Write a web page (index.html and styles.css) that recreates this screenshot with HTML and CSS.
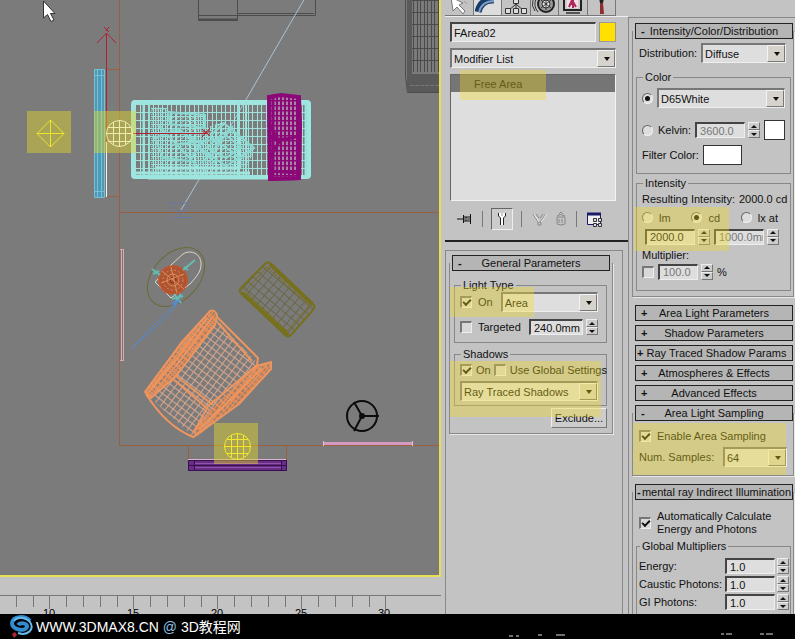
FILE: index.html
```
<!DOCTYPE html>
<html lang="en">
<head>
  <meta charset="UTF-8">
  <title>Modify Panel - Free Area Light</title>
  <link rel="stylesheet" href="styles.css">
</head>
<body>

<div class="workspace">

  <main class="view">
    <div class="viewport">
      <svg class="scene" viewBox="0 0 439 575" preserveAspectRatio="xMinYMin slice" role="img" aria-label="Top view of the room">
        <defs>
          <pattern id="sofa-mesh" width="9" height="8" patternUnits="userSpaceOnUse">
            <path d="M0 .5H9M.5 0V8M5.5 0V8" stroke="#a0e2dc" fill="none"/>
          </pattern>
          <pattern id="dense-mesh" width="5" height="4" patternUnits="userSpaceOnUse">
            <path d="M0 .5H5M.5 0V4M0 4L5 0" stroke="#98e2dc" fill="none"/>
          </pattern>
          <pattern id="purple-mesh" width="4" height="5" patternUnits="userSpaceOnUse">
            <path d="M0 .5H4M1 0V5" stroke="#8c0878" stroke-width="2" fill="none"/>
          </pattern>
          <pattern id="chair-mesh" width="6" height="6" patternUnits="userSpaceOnUse" patternTransform="rotate(37)">
            <path d="M0 .5H6M.5 0V6" stroke="#d8a68c" fill="none"/>
          </pattern>
          <pattern id="chair-edge" width="3" height="5" patternUnits="userSpaceOnUse" patternTransform="rotate(40)">
            <path d="M0 .5H3M.5 0V5" stroke="#f08c50" stroke-width="2" fill="none"/>
          </pattern>
          <pattern id="table-mesh" width="7" height="7" patternUnits="userSpaceOnUse" patternTransform="rotate(40)">
            <path d="M0 .5H7M.5 0V7" stroke="#6b6848" fill="none"/>
          </pattern>
          <pattern id="gray-mesh" width="7" height="12" patternUnits="userSpaceOnUse">
            <path d="M0 .5H7M.5 0V12M4.5 0V12" stroke="#4b4b4b" fill="none"/>
          </pattern>
        </defs>

        <!-- cabinets -->
        <g fill="none" stroke="#4c4c4c">
          <path d="M198.500 0V20.500H237.500V0M198 15.500H315.500V0M237 13.500H314" />
          <path d="M198 19.500H238" stroke-width="2"/>
          <path d="M405.500 0V76L407.500 92.500H439" />
        </g>
        <rect x="411" y="0" width="28" height="72" fill="url(#gray-mesh)"/>
        <path d="M407 0h5v74h27v18h-32z" fill="#5a5a5a"/>
        <path d="M410 85.500H439" stroke="#777" stroke-dasharray="4 1"/>

        <!-- walls -->
        <g fill="#98603f">
          <rect x="119" y="0" width="1" height="446"/>
          <rect x="119" y="212" width="320" height="1"/>
          <rect x="119" y="445" width="320" height="1"/>
        </g>
        <path d="M106 69.500H119M106 196.500H119M188.500 446V460M286.500 446V460" fill="none" stroke="#98603f"/>

        <!-- window on the left -->
        <rect x="94" y="69" width="11" height="128" fill="#4e98b8"/>
        <path d="M94.500 69.500H104.500V197.500H94.500ZM97.500 69V197M101.500 69V197M94 75.500H105M94 191.500H105" fill="none" stroke="#77c0d6"/>
        <path d="M106.500 142V197" stroke="#f2f2e8"/>

        <!-- light target line -->
        <path d="M305 -2L240 110L181 210" fill="none" stroke="#a9c3d8"/>
        <path d="M168 203H188M171 205L180 215L190 205M173 217.500H192" fill="none" stroke="#6878a5"/>

        <!-- sofa -->
        <rect x="132" y="101" width="178" height="78" fill="url(#sofa-mesh)"/>
        <rect x="133" y="102" width="176" height="75" rx="2" fill="none" stroke="#a0e6e0" stroke-width="4"/>
        <path d="M143.500 102V177M149 103V178M305.500 102V177M238 102V177M246 102V177" stroke="#98e2dc" stroke-width="2"/>
        <path d="M151 107L167 108L171 113L204 114L205 128L223 122L255 149L246 168L205 177H151Z" fill="url(#dense-mesh)"/>
        <path d="M168 112L205 115V128L170 124ZM198 147L224 123L254 148L226 166ZM207 148L223 133L241 147L226 158ZM155 138L176 130L201 143L190 161L163 158ZM178 128L215 163M171 145L221 139M159 126L199 168M202 163L233 126M211 137L242 159" fill="none" stroke="#8bd9d2" stroke-width="2"/>
        <path d="M136 173H250M148 178H268M155 168H239" stroke="#a0e6e0" stroke-width="3"/>

        <!-- sofa back cushion -->
        <path d="M268 96H300V180H268Z" fill="#a785a5"/>
        <path d="M267 96L276 94L299 96L301 180L268 181Z" fill="url(#purple-mesh)"/>
        <path d="M269 97L281 95L299 97L300 125L299 178L270 179Z" fill="none" stroke="#8c0878" stroke-width="4"/>
        <path d="M273 98V177M269 137Q281 142 298 136M270 125L279 142L270 158M271 171L297 173" fill="none" stroke="#8c0878" stroke-width="3"/>

        <!-- gizmo axes -->
        <rect x="107" y="133" width="101" height="1" fill="#b02030"/>
        <g fill="none" stroke="#b02030">
          <path d="M106.500 142V34M97 43L106.500 33L116 43M104 27L109 32M109 27L106 31"/>
          <path d="M202 129L210 136M210 128L202 137M203 132H211"/>
        </g>

        <!-- small round table with lamp -->
        <ellipse cx="176" cy="277" rx="34" ry="23" transform="rotate(-47 176 277)" fill="none" stroke="#6c6a36"/>
        <path d="M171 265L183 254C191 249 201 254 201 264C201 271 198 275 190 284L171 298L155 282Z" fill="none" stroke="#dfd8c8"/>
        <circle cx="173" cy="280" r="14" fill="#ad5430" stroke="#c55329" stroke-width="2" stroke-dasharray="3 1"/>
        <g fill="none" stroke="#df8c5d">
          <circle cx="173" cy="280" r="10" stroke-dasharray="2 2"/>
          <circle cx="173" cy="280" r="6"/>
          <circle cx="173" cy="280" r="3" stroke="#7d331f"/>
          <path d="M162 271L184 289M161 283L184 274M171 267L177 293"/>
        </g>
        <path d="M183 270L195 260M184 267L188 270M152 269L160 275M153 274L159 271M172 299L183 296M174 294L181 303M181 294L175 303" fill="none" stroke="#65bbb0" stroke-width="2"/>
        <path d="M131 349L176 302M133 347L166 318L177 304" fill="none" stroke="#5989c8"/>
        <path d="M172 302L181 299L175 307Z" fill="#5989c8"/>

        <!-- coffee table -->
        <path d="M268 262L315 307L288 338L239 290Z" fill="url(#table-mesh)"/>
        <path d="M266 263Q268 261 271 264L313 304Q316 307 312 311L291 335Q288 338 285 335L241 293Q238 290 242 287Z" fill="none" stroke="#77701c" stroke-width="2"/>
        <path d="M267 267L309 306L287 331L245 291Z" fill="none" stroke="#77701c"/>
        <path d="M242 293L288 335M270 264L312 304" stroke="#77701c" stroke-width="4"/>

        <!-- armchair -->
        <path d="M210 313L217 320L258 364L270 365L240 397L194 437L146 394L173 355Z" fill="url(#chair-mesh)"/>
        <path d="M211 310L216 314L214 325L176 376L151 398L145 392L181 342Z" fill="url(#chair-edge)"/>
        <path d="M257 365L270 362L271 369L239 404L195 438L193 430L214 406Z" fill="url(#chair-edge)"/>
        <g fill="none" stroke="#ed955f" stroke-width="2">
          <path d="M210 311Q215 309 217 315L215 325L176 376L151 398L145 392L182 342Z"/>
          <path d="M216 316L258 358L257 365L211 404M218 323L252 361M146 394Q166 426 193 437L239 404L271 369V362L257 366L208 406L194 432"/>
          <path d="M176 376L213 405M173 379L209 410M207 318L178 357L151 389M212 318L176 366M262 368L225 405L199 429"/>
        </g>

        <!-- window at the bottom -->
        <rect x="188" y="460" width="99" height="11" fill="#633082"/>
        <path d="M188.500 460.500H286.500V470.500H188.500ZM188 465.500H287M194.500 460V471M281.500 460V471" fill="none" stroke="#3e0b57"/>
        <path d="M195 463.500H281M195 467.500H281" stroke="#9350ad"/>
        <path d="M188 459.500H286" stroke="#d6b7c8"/>

        <!-- doors -->
        <path d="M121.500 250V360.500M123.500 249V360M120 249.500H124M120 360.500H124" stroke="#d8a8b8"/>
        <path d="M323 443.500H413" stroke="#d59ac1" stroke-width="3"/>
        <path d="M323.500 441V446M412.500 441V446" stroke="#e4bfd8"/>

        <!-- floor lamp -->
        <g fill="none" stroke="#0c0c0c" stroke-width="2">
          <circle cx="362" cy="416" r="15"/>
          <path d="M362 416H379M362 416L354 402M362 416L354 431"/>
        </g>
        <circle cx="362" cy="416" r="3" fill="#0c0c0c"/>

        <!-- highlighted lights -->
        <g fill="#e4d62c" fill-opacity=".45">
          <rect x="27" y="111" width="44" height="42"/>
          <rect x="94" y="111" width="42" height="42"/>
          <rect x="214" y="423" width="44" height="41"/>
        </g>
        <path d="M50.500 120L64 133.500L50.500 147L37 133.500ZM50.500 120V147M37 133.500H64" fill="none" stroke="#ece52a"/>
        <g fill="none" stroke="#f0ecae">
          <circle cx="119.500" cy="133.500" r="13"/>
          <path d="M119.500 120V147M108 127.500H131M106 133.500H133M108 141.500H131M113.500 122V145M125.500 122V145"/>
        </g>
        <g fill="none" stroke="#f2e92e">
          <circle cx="237.500" cy="446.500" r="13"/>
          <path d="M237.500 433V460M224 446.500H251M227 439.500H248M227 453.500H248M231.500 435V458M243.500 435V458"/>
        </g>

        <path d="M43.500 1V18L47.500 14.500L51 21.500L54 20L50.500 13.500H55Z" fill="#fff" stroke="#333"/>
      </svg>
    </div>
    <svg class="ruler" aria-label="Time ruler">
      <defs>
        <pattern id="ticks" x="16" width="84" height="16" patternUnits="userSpaceOnUse">
          <path d="M.5 2V13M17.500 2V13M33.500 2V15M50.500 2V13M67.500 2V13" stroke="#777" fill="none"/>
        </pattern>
      </defs>
      <rect y="1" width="100%" height="1" fill="#777"/>
      <rect x="16" width="370" height="15" fill="url(#ticks)"/>
      <g class="ruler-label">
        <text x="49" y="23">10</text>
        <text x="133" y="23">15</text>
        <text x="217" y="23">20</text>
        <text x="301" y="23">25</text>
        <text x="384" y="23">30</text>
      </g>
    </svg>
  </main>

  <aside class="modify">
    <nav class="tabs">
      <button type="button" aria-label="Create"><svg width="24" height="16"><path d="M4 -3L6 11L10 7L16 14L18 11L12 5L16 3Z" fill="#fff" stroke="#777"/><path d="M17 1L20 4" stroke="#999"/></svg></button>
      <button type="button" class="active" aria-label="Modify"><svg width="24" height="16"><path d="M3 12Q6 -1 19 0" fill="none" stroke="#183a66" stroke-width="7"/><path d="M4 12Q7 1 19 1" fill="none" stroke="#7c9fca" stroke-width="2"/></svg></button>
      <button type="button" aria-label="Hierarchy"><svg width="24" height="16"><path d="M12 2V8M4 11L12 4L20 11" fill="none" stroke="#333"/><path d="M9.500 -2H14.500V3.500H9.500ZM1.500 8.500H6.500V13.500H1.500ZM9.500 8.500H14.500V13.500H9.500ZM17.500 8.500H22.500V13.500H17.500Z" fill="#ddd" stroke="#333"/></svg></button>
      <button type="button" aria-label="Motion"><svg width="24" height="16"><circle cx="14" cy="4" r="8" fill="#999" stroke="#222" stroke-width="2"/><circle cx="14" cy="4" r="4" fill="#eee" stroke="#333"/><path d="M9 0L19 8M19 0L9 8M14 -1V10" stroke="#333"/><path d="M4 -1Q1 6 6 12M1 0Q-1 6 3 11" fill="none" stroke="#333"/></svg></button>
      <button type="button" aria-label="Display"><svg width="24" height="16"><path d="M3 -2H20V10H3Z" fill="#ccc" stroke="#222" stroke-width="2"/><path d="M6 0H17V8H6Z" fill="#f5dbe5"/><path d="M8 7L11 0L15 7M9 4H14M12 0V8" fill="none" stroke="#ad2859" stroke-width="2"/><path d="M5 12H19V14H5Z" fill="#555"/></svg></button>
      <button type="button" aria-label="Utilities"><svg width="24" height="16"><path d="M10 -2H15L14 3H11Z" fill="#222"/><path d="M11 3H14L15 14H11Z" fill="#8f2c30"/></svg></button>
    </nav>

    <div class="object">
      <div class="name-row">
        <input type="text" class="field name" value="FArea02" aria-label="Object name">
        <button type="button" class="swatch yellow" aria-label="Object color"></button>
      </div>
      <span class="combo">
        <select aria-label="Modifier List"><option>Modifier List</option></select>
      </span>
      <ul class="stack">
        <li class="selected">Free Area<span class="marker marker-stack"></span></li>
      </ul>
      <div class="stack-tools">
        <button type="button" aria-label="Pin stack"><svg width="17" height="16"><path d="M1 8H7M7.500 4V12M7 6H14M7 10H14M14.500 3V13M10 6V10" fill="none" stroke="#111"/><path d="M8 8H14" stroke="#777" stroke-width="2"/></svg></button>
        <i></i>
        <button type="button" class="pressed" aria-label="Show end result"><svg width="12" height="16"><path d="M3 2H5V5H7V2H9V5L8 7V14H4V7L3 5Z" fill="#fff"/><path d="M2.500 2V5L4.500 7V14M9.500 2V5L7.500 7V14" fill="none" stroke="#222"/></svg></button>
        <i></i>
        <button type="button" aria-label="Make unique"><svg width="17" height="16"><path d="M2 3L7 11M15 3L9 11M5 3L8 7M12 3L9 7M7 11H10V14H7Z" fill="none" stroke="#888"/><path d="M3 3L8 11M16 3L10 11" stroke="#eee"/></svg></button>
        <button type="button" aria-label="Remove modifier"><svg width="13" height="16"><path d="M3 6H11V13Q7 15 3 13ZM3 5Q6 2 11 5M5 3L7 1L9 3M5 8V12M8 8V12" fill="none" stroke="#888"/></svg></button>
        <i></i>
        <button type="button" aria-label="Configure modifier sets"><svg width="17" height="16"><path d="M1.500 2.500H14.500V13.500H1.500Z" fill="#eee" stroke="#1a1a66"/><path d="M1 3H15" stroke="#1a1a66" stroke-width="3"/><path d="M7.500 7.500H10.500V10.500H7.500ZM12.500 7.500H15.500V10.500H12.500ZM7.500 12.500H10.500V15.500H7.500ZM12.500 12.500H15.500V15.500H12.500Z" fill="#ddd" stroke="#333"/></svg></button>
      </div>
    </div>

    <div class="rollouts">
      <section class="rollout open general">
        <button type="button" class="title"><b>-</b>General Parameters</button>
        <div class="rollout-body">
          <span class="marker marker-light"></span>
          <span class="marker marker-shadow"></span>
          <fieldset class="light-type">
            <legend>Light Type</legend>
            <div class="row">
              <label class="check"><input type="checkbox" checked>On</label>
              <span class="combo grow"><select aria-label="Light type"><option>Area</option></select></span>
            </div>
            <div class="row">
              <label class="check grow"><input type="checkbox">Targeted</label>
              <span class="spinner wide"><input type="text" class="field" value="240.0mm" aria-label="Target distance"><span><button type="button" aria-label="Up"></button><button type="button" aria-label="Down"></button></span></span>
            </div>
          </fieldset>
          <fieldset class="shadows">
            <legend>Shadows</legend>
            <div class="row tight">
              <label class="check"><input type="checkbox" checked>On</label>
              <label class="check"><input type="checkbox">Use Global Settings</label>
            </div>
            <span class="combo"><select aria-label="Shadow type"><option>Ray Traced Shadows</option></select></span>
          </fieldset>
          <button type="button" class="exclude">Exclude...</button>
        </div>
      </section>
    </div>
  </aside>

  <aside class="params">
    <section class="rollout open">
      <button type="button" class="title"><b>-</b>Intensity/Color/Distribution</button>
      <div class="rollout-body">
        <div class="row distribution">
          <label for="distribution">Distribution:</label>
          <span class="combo grow"><select id="distribution"><option>Diffuse</option></select></span>
        </div>
        <fieldset class="color">
          <legend>Color</legend>
          <div class="row preset">
            <input type="radio" name="color" aria-label="Preset color" checked>
            <span class="combo grow"><select aria-label="Color preset"><option>D65White</option></select></span>
          </div>
          <div class="row">
            <label class="check grow"><input type="radio" name="color">Kelvin:</label>
            <span class="spinner off"><input type="text" class="field" value="3600.0" aria-label="Kelvin"><span><button type="button" aria-label="Up"></button><button type="button" aria-label="Down"></button></span></span>
            <button type="button" class="swatch" aria-label="Kelvin color"></button>
          </div>
          <div class="row filter">
            <span>Filter Color:</span>
            <button type="button" class="swatch long" aria-label="Filter color"></button>
          </div>
        </fieldset>
        <fieldset class="intensity">
          <legend>Intensity</legend>
          <p class="row between">Resulting Intensity: <output>2000.0 cd</output></p>
          <div class="row units">
            <span class="marker marker-intensity"></span>
            <label class="check"><input type="radio" name="unit">lm</label>
            <label class="check"><input type="radio" name="unit" checked>cd</label>
            <label class="check"><input type="radio" name="unit">lx at</label>
          </div>
          <div class="row amounts">
            <span class="spinner"><input type="text" class="field" value="2000.0" aria-label="Intensity"><span><button type="button" aria-label="Up"></button><button type="button" aria-label="Down"></button></span></span>
            <span class="spinner off"><input type="text" class="field" value="1000.0mm" aria-label="Distance"><span><button type="button" aria-label="Up"></button><button type="button" aria-label="Down"></button></span></span>
          </div>
          <p class="caption">Multiplier:</p>
          <div class="row multiplier">
            <input type="checkbox" aria-label="Use multiplier">
            <span class="spinner small off"><input type="text" class="field" value="100.0" aria-label="Multiplier"><span><button type="button" aria-label="Up"></button><button type="button" aria-label="Down"></button></span></span>
            <span>%</span>
          </div>
        </fieldset>
      </div>
    </section>
    <section class="rollout"><button type="button" class="title"><b>+</b>Area Light Parameters</button></section>
    <section class="rollout"><button type="button" class="title"><b>+</b>Shadow Parameters</button></section>
    <section class="rollout"><button type="button" class="title long"><b>+</b>Ray Traced Shadow Params</button></section>
    <section class="rollout"><button type="button" class="title"><b>+</b>Atmospheres &amp; Effects</button></section>
    <section class="rollout"><button type="button" class="title"><b>+</b>Advanced Effects</button></section>
    <section class="rollout open">
      <button type="button" class="title"><b>-</b>Area Light Sampling</button>
      <div class="rollout-body sampling">
        <span class="marker marker-sampling"></span>
        <label class="check"><input type="checkbox" checked>Enable Area Sampling</label>
        <div class="row between">
          <label for="samples">Num. Samples:</label>
          <span class="combo samples"><select id="samples"><option>64</option></select></span>
        </div>
      </div>
    </section>
    <section class="rollout open">
      <button type="button" class="title long"><b>-</b>mental ray Indirect Illumination</button>
      <div class="rollout-body indirect">
        <label class="check"><input type="checkbox" checked><span>Automatically Calculate<br>Energy and Photons</span></label>
        <fieldset class="multipliers">
          <legend>Global Multipliers</legend>
          <div class="row between"><label for="energy">Energy:</label><span class="spinner"><input type="text" class="field" id="energy" value="1.0"><span><button type="button" aria-label="Up"></button><button type="button" aria-label="Down"></button></span></span></div>
          <div class="row between"><label for="caustic">Caustic Photons:</label><span class="spinner"><input type="text" class="field" id="caustic" value="1.0"><span><button type="button" aria-label="Up"></button><button type="button" aria-label="Down"></button></span></span></div>
          <div class="row between"><label for="gi">GI Photons:</label><span class="spinner"><input type="text" class="field" id="gi" value="1.0"><span><button type="button" aria-label="Up"></button><button type="button" aria-label="Down"></button></span></span></div>
        </fieldset>
      </div>
    </section>
  </aside>
</div>

<footer class="banner">
  <svg width="24" height="24" viewBox="0 0 24 24">
    <path d="M20 6C15 0 3 1 2 8C2 15 15 17 17 12C18 8 10 7 8 10" fill="none" stroke="#318cd0" stroke-width="4"/>
    <path d="M4 6C7 1 16 2 20 7C25 15 17 21 8 18" fill="none" stroke="#65b8ec" stroke-width="2"/>
    <path d="M2 19L5 17L7 20L4 23Z" fill="#b62335"/>
  </svg>
  <span>WWW.3DMAX8.CN <em>@</em> 3D教程网</span>
  <svg class="specks" width="270" height="6"><path d="M2 3h4M9 3h3M31 2h4M49 2h9M214 1h3M219 1h6M253 1h4M259 1h7" stroke="#ddd"/></svg>
</footer>

</body>
</html>
```
FILE: styles.css
```
* {
  box-sizing: border-box;
}
body {
  margin: 0;
  height: 100vh;
  display: flex;
  flex-direction: column;
  overflow: hidden;
  background: #c3c3c3;
  color: #111;
  font: 11px/14px "Liberation Sans", Arial, sans-serif;
}
button, input, select {
  font: inherit;
  color: inherit;
  margin: 0;
  padding: 0;
  border: 0;
  border-radius: 0;
}
p, ul {
  margin: 0;
  padding: 0;
  list-style: none;
}
.workspace {
  flex: 1;
  min-height: 0;
  display: grid;
  grid-template-columns: minmax(0, 1fr) 187px 167px;
  grid-template-rows: minmax(0, 1fr);
}

/* viewport */
.view {
  display: flex;
  flex-direction: column;
  min-height: 0;
}
.viewport {
  flex: 1;
  min-height: 0;
  background: #7b7b7b;
  border-right: 2px solid #e8e052;
  border-bottom: 2px solid #e8e052;
}
.scene {
  display: block;
  width: 100%;
  height: 100%;
}
.ruler {
  display: block;
  width: 100%;
  height: 20px;
  margin-top: 17px;
}
.ruler-label {
  font-size: 11px;
  text-anchor: middle;
}

/* modify panel */
.modify {
  overflow: hidden;
  padding-left: 4px;
}
.tabs {
  display: flex;
  height: 17px;
  padding-right: 12px;
  border-bottom: 1px solid #eee;
}
.tabs button {
  flex: 1;
  height: 16px;
  background: #c3c3c3;
  border-right: 1px solid #777;
  border-bottom: 1px solid #777;
  text-align: center;
}
.tabs button.active {
  background: #ddd;
}
.tabs svg {
  display: block;
  margin: 0 auto;
}
.object {
  display: flex;
  flex-direction: column;
  gap: 6px;
  padding: 5px 12px 9px 5px;
  border-bottom: 2px solid #222;
}
.name-row {
  display: flex;
  gap: 3px;
  height: 20px;
}
.field {
  min-width: 0;
  height: 16px;
  padding: 0 0 0 3px;
  background: #dedede;
  border: 1px solid #eee;
  border-top: 2px solid #444;
  border-left: 2px solid #444;
}
.name {
  flex: 1;
  height: 20px;
  padding-left: 2px;
}
.swatch {
  flex: none;
  width: 21px;
  height: 20px;
  background: #fff;
  border: 1px solid #333;
}
.swatch.long {
  width: 39px;
}
.swatch.yellow {
  width: 17px;
  background: #ffe000;
  border: 1px solid #999;
}
.combo {
  position: relative;
  display: block;
}
.combo select {
  display: block;
  width: 100%;
  height: 20px;
  padding: 0 18px 0 2px;
  appearance: none;
  background: #dedede;
  border: 1px solid #eee;
  border-top: 2px solid #777;
  border-left: 2px solid #777;
}
.combo::before {
  content: "";
  position: absolute;
  top: 2px;
  right: 1px;
  bottom: 1px;
  width: 16px;
  background: #d6d3cc;
  border: 1px solid #f4f4f4;
  border-right-color: #777;
  border-bottom-color: #777;
  pointer-events: none;
}
.combo::after {
  content: "";
  position: absolute;
  top: 9px;
  right: 6px;
  border: 3px solid transparent;
  border-top: 4px solid #111;
  border-bottom: 0;
  pointer-events: none;
}
.grow {
  flex: 1;
}
.stack {
  height: 127px;
  background: #dedede;
  border: 1px solid #f2f2f2;
  border-top-color: #666;
  border-left-color: #666;
}
.stack .selected {
  position: relative;
  height: 17px;
  padding-left: 23px;
  line-height: 19px;
  background: #757575;
}
.stack-tools {
  display: flex;
  align-items: center;
  gap: 4px;
  height: 24px;
  padding: 0 5px;
}
.stack-tools button {
  height: 22px;
  padding: 0 1px;
  background: none;
}
.stack-tools svg {
  display: block;
}
.stack-tools .pressed {
  width: 22px;
  padding: 0 4px;
  background: #ccc;
  border: 1px solid #eee;
  border-top-color: #666;
  border-left-color: #666;
}
.stack-tools i {
  width: 1px;
  height: 16px;
  margin: 0 4px;
  background: #777;
}

/* rollouts */
.rollouts {
  height: 100%;
  margin: 8px 5px 0 0;
  padding: 4px 9px 0 3px;
  border: 1px solid #888;
}
.rollout {
  position: relative;
  padding: 0 0 4px;
}
.rollout .title {
  display: block;
  position: relative;
  z-index: 1;
  width: calc(100% - 6px);
  height: 16px;
  margin: 0 3px;
  line-height: 14px;
  background: #b5b5b5;
  border: 1px solid #222;
  white-space: nowrap;
}
.rollout .title b {
  position: absolute;
  left: 5px;
}
.rollout .title.long {
  padding-left: 5px;
}
.rollout .title.long b {
  left: 1px;
}
.rollout-body {
  position: relative;
  margin-top: -8px;
  padding: 12px 5px 5px 4px;
  border: 1px solid #888;
  border-top: 0;
  box-shadow: 1px 1px #e8e8e8;
}
fieldset {
  min-width: 0;
  margin: 0;
  padding: 0 5px;
  border: 1px solid #888;
}
legend {
  height: 12px;
  line-height: 12px;
  margin-left: 1px;
  padding: 0 2px;
}
.row {
  display: flex;
  align-items: center;
  gap: 5px;
  white-space: nowrap;
}
.between {
  justify-content: space-between;
}
.check {
  display: flex;
  align-items: center;
  gap: 6px;
  white-space: nowrap;
}
input[type="checkbox"] {
  flex: none;
  appearance: none;
  width: 12px;
  height: 12px;
  background: #d8d8d8;
  border: 1px solid #eee;
  border-top: 2px solid #777;
  border-left: 2px solid #777;
}
input[type="checkbox"]:checked::before {
  content: "";
  display: block;
  width: 6px;
  height: 3px;
  margin: 1px;
  border-left: 2px solid #111;
  border-bottom: 2px solid #111;
  transform: rotate(-45deg);
}
input[type="radio"] {
  flex: none;
  appearance: none;
  width: 11px;
  height: 11px;
  padding: 2px;
  background: #ddd;
  border: 1px solid #f2f2f2;
  border-top-color: #666;
  border-left-color: #666;
  border-radius: 50%;
}
input[type="radio"]:checked::before {
  content: "";
  display: block;
  width: 5px;
  height: 5px;
  background: #111;
  border-radius: 50%;
}
.spinner {
  display: flex;
  flex: none;
  gap: 3px;
}
.spinner .field {
  width: 50px;
}
.spinner.wide .field {
  width: 54px;
}
.spinner.small .field {
  width: 40px;
}
.spinner.off .field {
  color: #777;
}
.spinner > span {
  display: flex;
  flex-direction: column;
}
.spinner button {
  display: flex;
  align-items: center;
  justify-content: center;
  width: 12px;
  height: 8px;
  background: #ccc;
  border: 1px solid #eee;
  border-right-color: #777;
  border-bottom-color: #777;
}
.spinner button::before {
  content: "";
  border: 3px solid transparent;
  border-top: 0;
  border-bottom: 3px solid #111;
}
.spinner button + button::before {
  border-top: 3px solid #111;
  border-bottom: 0;
}

.general .rollout-body {
  padding-top: 16px;
}
.light-type {
  height: 64px;
}
.light-type .row {
  height: 22px;
  margin-bottom: 3px;
}
.light-type .combo {
  margin: 0 3px;
}
.light-type .spinner {
  margin-right: 3px;
}
.shadows {
  height: 58px;
  margin-top: 5px;
}
.shadows .row {
  height: 20px;
  margin-bottom: 1px;
}
.shadows .row.tight {
  gap: 3px;
}
.tight .check {
  gap: 4px;
}
.shadows .combo {
  margin-right: 3px;
}
.exclude {
  display: block;
  width: 56px;
  height: 20px;
  margin: 2px 0 0 auto;
  background: #ccc;
  border: 1px solid #eee;
  border-right-color: #777;
  border-bottom-color: #777;
}

/* parameters panel */
.params {
  margin-top: 17px;
  padding: 5px 0 0 3px;
  border: 1px solid #888;
  border-right: 0;
  border-bottom: 0;
  overflow: hidden;
}
.params .rollout-body {
  margin-right: 1px;
  padding-left: 3px;
  padding-right: 2px;
}
.params .rollout .title {
  width: calc(100% - 5px);
  margin-right: 2px;
}
.params .rollout.open {
  padding-bottom: 8px;
}
.params fieldset {
  padding: 0 5px;
}
.params .row {
  gap: 4px;
}
.params .distribution {
  height: 20px;
  margin: 0 5px 8px 3px;
}
.color {
  height: 103px;
}
.color .check {
  gap: 5px;
}
.color .row {
  height: 20px;
  margin-bottom: 5px;
}
.color .row.preset {
  margin: 5px 0 12px;
}
.intensity {
  height: 114px;
  margin-top: 3px;
}
.intensity .row {
  height: 19px;
}
.intensity .units {
  position: relative;
  justify-content: space-between;
  padding-right: 7px;
}
.intensity .amounts {
  margin-left: 3px;
}
.caption {
  margin-top: 2px;
}
.sampling {
  min-height: 63px;
}
.sampling .check {
  height: 22px;
  margin-left: 3px;
}
.sampling .row {
  margin: 0 4px 0 3px;
}
.sampling .samples {
  width: 64px;
}
.indirect > .check {
  height: 32px;
  margin: 3px 0 0 3px;
  line-height: 13px;
}
.params .multipliers {
  margin-top: 1px;
  padding: 5px 1px 8px 2px;
}
.multipliers .row {
  height: 18px;
}
.params .multipliers .row {
  gap: 1px;
}
.multipliers .spinner {
  gap: 2px;
}

/* translucent pen marks over the settings */
.marker {
  position: absolute;
  z-index: 2;
  background: rgba(242, 220, 30, 0.36);
  pointer-events: none;
}
.marker-stack {
  left: 9px;
  top: -5px;
  width: 86px;
  height: 30px;
}
.marker-light {
  left: 0;
  top: 24px;
  width: 84px;
  height: 30px;
}
.marker-shadow {
  left: 0;
  top: 98px;
  width: 151px;
  height: 56px;
}
.marker-intensity {
  left: -8px;
  top: -1px;
  width: 95px;
  height: 44px;
}
.marker-sampling {
  left: 0;
  top: 10px;
  width: 153px;
  bottom: 0;
}

.banner {
  flex: none;
  display: flex;
  align-items: center;
  gap: 2px;
  height: 25px;
  padding-left: 10px;
  background: #000;
  color: #fff;
  font: 14px/20px "Liberation Sans", "Noto Sans CJK SC", sans-serif;
}
.banner em {
  color: #8fc4e8;
  font-style: normal;
}
.specks {
  align-self: flex-end;
  margin: 0 18px 0 auto;
}
```
